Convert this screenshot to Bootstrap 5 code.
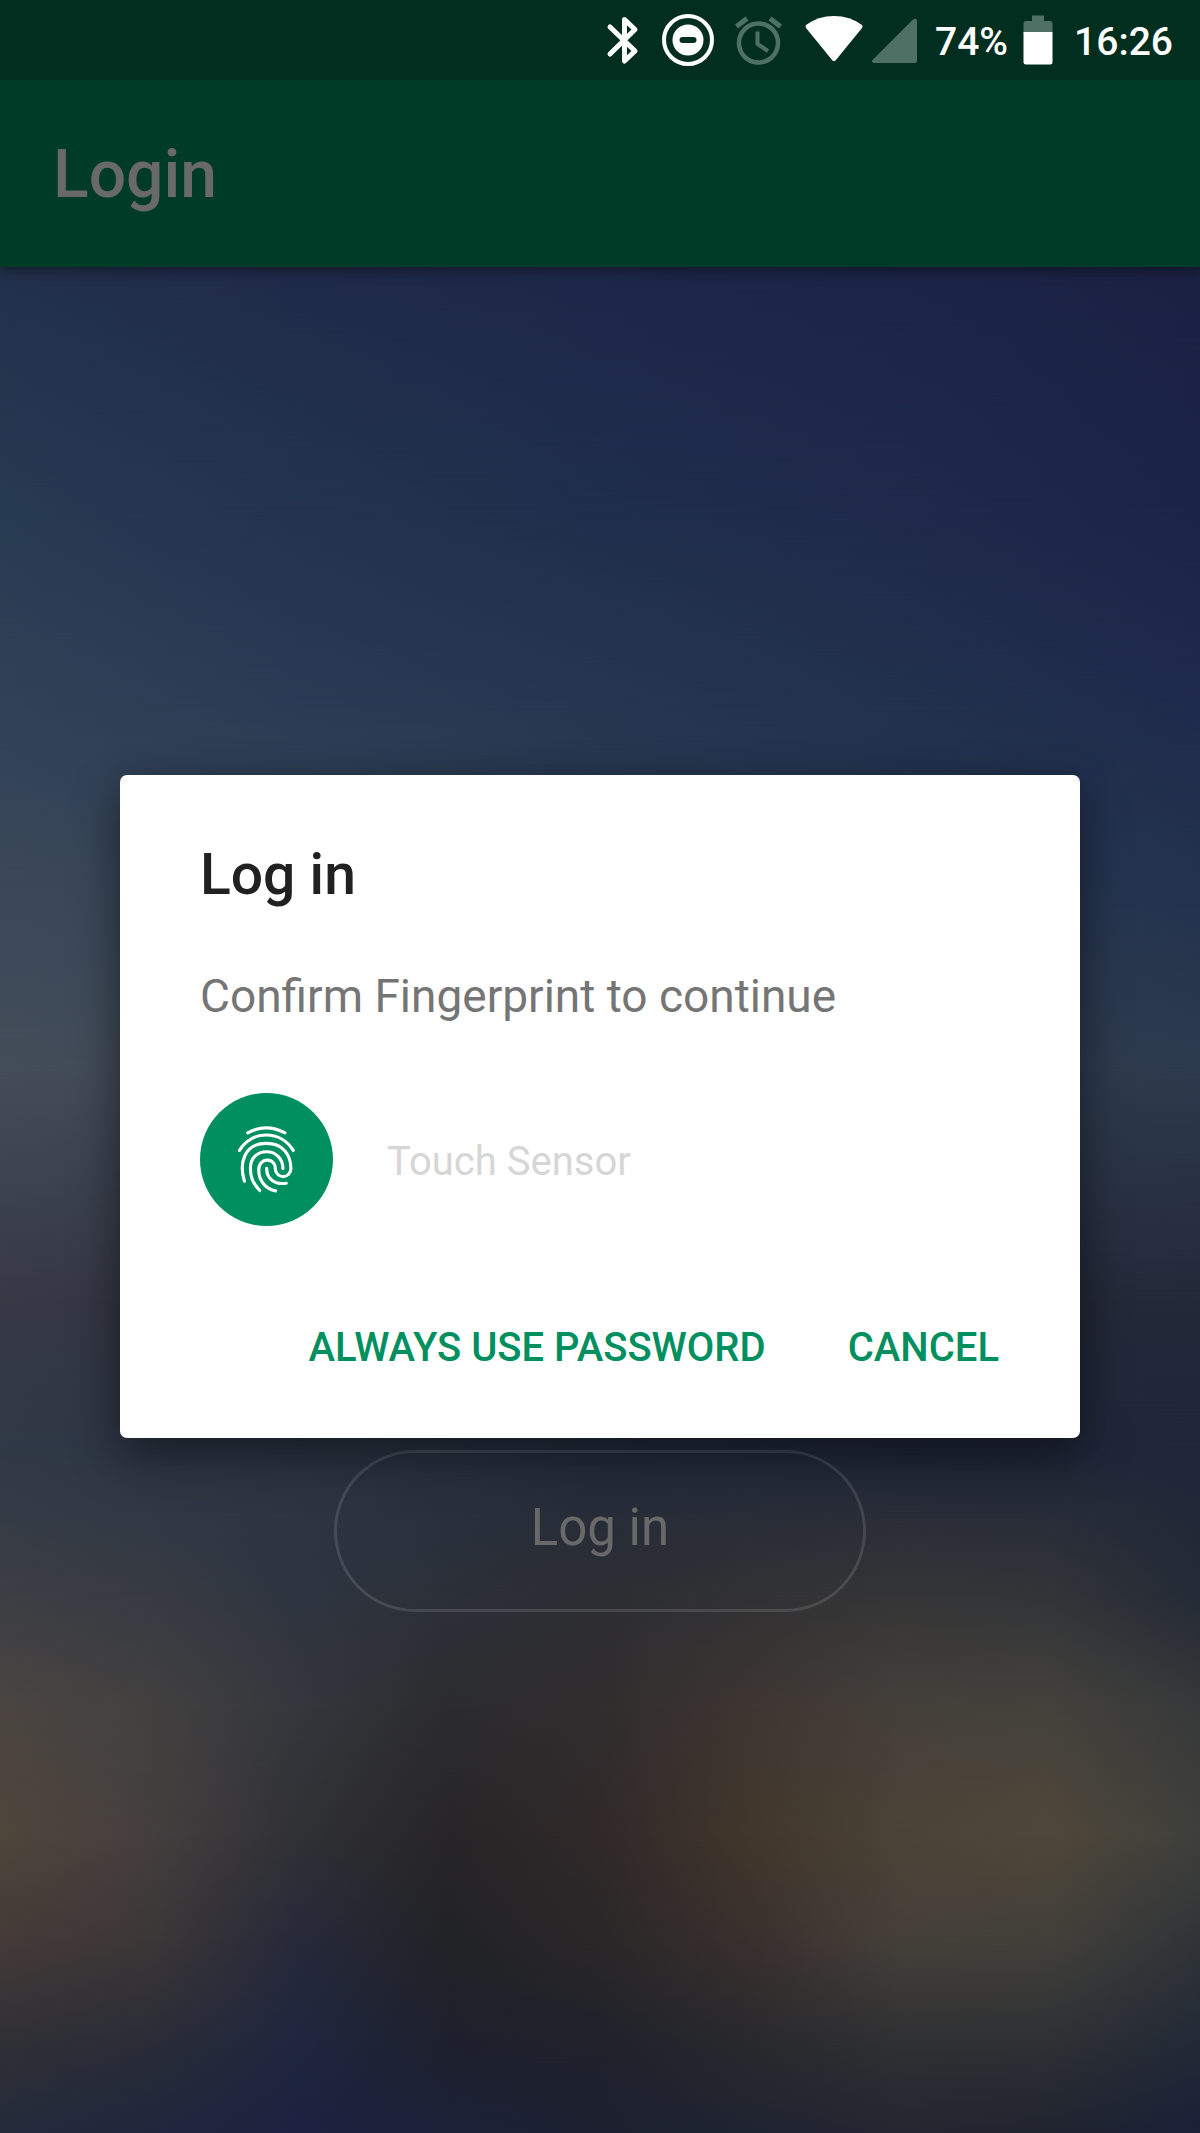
<!DOCTYPE html>
<html lang="en">
<head>
<meta charset="utf-8">
<meta name="viewport" content="width=device-width, initial-scale=1">
<title>Login</title>
<link href="https://cdn.jsdelivr.net/npm/bootstrap@5.3.0/dist/css/bootstrap.min.css" rel="stylesheet">
<style>
  body { font-family: Roboto, "Noto Sans", sans-serif; background: #1c2240; }

  /* Backdrop: horizontal colour bands, each fading in over the one above */
  .band { position: absolute; inset: 0; background: linear-gradient(to right, var(--c)); -webkit-mask-image: linear-gradient(transparent var(--a), #000 var(--b)); mask-image: linear-gradient(transparent var(--a), #000 var(--b)); }
  .band-1 { --a: -2%; --b: -1%; --c: #22304b, #1f2a4a, #1d2749, #1c2447, #1b2143; }
  .band-2 { --a: 12%; --b: 24%; --c: #273b52, #23344f, #202e4d, #1f2a4b, #1c2447; }
  .band-3 { --a: 24%; --b: 33%; --c: #314258, #2a3b54, #263750, #22314e, #1f2b4c; }
  .band-4 { --a: 33%; --b: 41%; --c: #3a4858, #36465a, #2b3c54, #283952, #23324e; }
  .band-5 { --a: 41%; --b: 50%; --c: #444d5a, #404a58, #36424f, #303d4e, #2d3b4e; }
  .band-6 { --a: 50%; --b: 61%; --c: #373945, #2f3440, #292d3a, #252a39, #242939; }
  .band-7 { --a: 61%; --b: 68%; --c: #303947, #2b3543, #232c3c, #202738, #1f2639; }
  .band-8 { --a: 68%; --b: 75%; --c: #3d3f44, #383b43, #2f3540, #2c3038, #2d2e33, #323234, #363637, #333538, #252b36; }
  .band-9 { --a: 75%; --b: 80%; --c: #4b4541, #434140, #35373d, #2c2c2f, #312d2e, #3e3632, #45403b, #44423c, #37393a; }
  .band-10 { --a: 80%; --b: 86%; --c: #4f463b, #453f3f, #303135, #272527, #31292a, #42372b, #4c4337, #4f4739, #3f403c; }
  .band-11 { --a: 86%; --b: 91%; --c: #453a38, #3c3737, #26293a, #222326, #2a2728, #3a302e, #45403a, #42403a, #303438; }
  .band-12 { --a: 91%; --b: 96%; --c: #2f3036, #292c37, #1f263f, #1d202d, #1f222b, #28292d, #2f3033, #2d3034, #222936; }
  .band-13 { --a: 96%; --b: 100%; --c: #242b3b, #20273d, #1c2240, #1c2138, #1c2030, #1f2431, #242631, #20242f, #1b2038; }

  .status { height: 80px; background: #022e20; color: #fff; font-size: 39px; font-weight: 500; line-height: 80px; padding-right: 27px; }
  .status svg { height: 80px; flex: none; }
  .status span { padding-top: 3px; }
  .charge { padding: 0 9px 0 14px; }
  .clock { padding-left: 15px; }
  .dim { fill: #4f7065; }
  .toolbar { height: 187px; background: #003b27; padding: 3px 53px 0; box-shadow: 0 4px 12px rgba(0, 0, 0, .4); }
  .toolbar h1 { font-size: 66px; font-weight: 500; line-height: 80px; color: #696969; }
  .pill { width: 532px; height: 162px; margin-bottom: 521px; border: 3px solid rgba(255, 255, 255, .12); border-radius: 81px; font-size: 51px; color: #696969; padding: 0 0 6px; }
  .pill:hover { color: #808080; border-color: #666; }

  .scrim { position: absolute; inset: 80px 0 0; }
  .dialog { width: 80%; border-radius: 7px; padding: 67px 80px 65px; box-shadow: 0 20px 50px rgba(0, 0, 0, .4), 0 0 30px rgba(0, 0, 0, .15); }
  .dialog h2 { font-size: 57px; font-weight: 500; line-height: 66px; color: #212121; margin-bottom: 60px; }
  .message { font-size: 46px; line-height: 56px; color: #757575; margin-bottom: 69px; }
  .sensor { gap: 54px; font-size: 40px; color: #d6d6d6; }
  .sensor span { padding-top: 4px; }
  .finger { width: 133px; height: 133px; flex: none; }
  .actions { gap: 82px; margin-top: 97px; padding-right: 1px; }
  .action { font-size: 40px; font-weight: 500; line-height: 50px; color: #009060; padding: 0; border: 0; border-radius: 4px; }
  .action:hover { color: #00704b; }
</style>
<script src="https://cdn.jsdelivr.net/npm/bootstrap@5.3.0/dist/js/bootstrap.bundle.min.js"></script>
</head>
<body>
<div class="position-relative min-vh-100 d-flex flex-column overflow-hidden">
  <div class="position-absolute top-0 start-0 w-100 h-100" aria-hidden="true">
    <div class="band band-1"></div><div class="band band-2"></div><div class="band band-3"></div>
    <div class="band band-4"></div><div class="band band-5"></div><div class="band band-6"></div>
    <div class="band band-7"></div><div class="band band-8"></div><div class="band band-9"></div>
    <div class="band band-10"></div><div class="band band-11"></div><div class="band band-12"></div>
    <div class="band band-13"></div>
  </div>

  <div class="status d-flex justify-content-end align-items-center position-relative z-1">
    <svg width="54" viewBox="596 0 54 80" role="img" aria-label="Bluetooth" fill="none" stroke="#fff" stroke-width="5" stroke-linecap="round" stroke-linejoin="round"><path d="M610 27 635 51 624.500 61V19.500L635 29.500 610 54"/></svg>
    <svg width="75" viewBox="650 0 75 80" role="img" aria-label="Do not disturb"><circle cx="688" cy="40" r="24" fill="none" stroke="#fff" stroke-width="4"/><circle cx="688" cy="40" r="15.500" fill="#fff"/><rect x="679.500" y="37" width="17" height="6" rx="3" fill="#022e20"/></svg>
    <svg width="68" viewBox="725 0 68 80" role="img" aria-label="Alarm" fill="none" stroke="#4f7065" stroke-width="4.500"><circle cx="758.500" cy="43" r="19.500"/><path d="M757.500 31.500V44l10.500 7" stroke-width="4"/><path d="M736.500 26.500 747 18.500M770 18.500 780.500 26.500" stroke-width="5"/></svg>
    <svg width="74" viewBox="793 0 74 80" role="img" aria-label="Wi-Fi"><path d="M806 25Q818 16 834 16T862 25Q863 26.500 862 28L835.500 60.500Q834 62 832.500 60.500L806 28Q805 26.500 806 25Z" fill="#fff"/></svg>
    <svg width="54" viewBox="867 0 54 80" role="img" aria-label="Mobile signal"><path d="M873 59.500 912.500 20Q916.500 17 917 21V61Q917 63 915 63H874Q870.500 62 873 59.500Z" class="dim"/></svg>
    <span class="charge">74%</span>
    <svg width="42" viewBox="1018 0 42 80" role="img" aria-label="Battery"><path d="M1033 15.500H1045V21H1051Q1053.500 21 1053.500 23.500V33H1024.500V23.500Q1024.500 21 1027 21H1033Z" class="dim"/><path d="M1024.500 32H1053.500V62Q1053.500 64.500 1051 64.500H1027Q1024.500 64.500 1024.500 62Z" fill="#fff"/></svg>
    <span class="clock">16:26</span>
  </div>

  <header class="toolbar d-flex align-items-center position-relative">
    <h1 class="m-0">Login</h1>
  </header>

  <main class="flex-grow-1 d-flex flex-column align-items-center justify-content-end position-relative">
    <button type="button" class="pill btn">Log in</button>
  </main>

  <div class="scrim d-flex align-items-center justify-content-center">
    <section class="dialog bg-white" role="dialog" aria-labelledby="dialog-title">
      <h2 id="dialog-title">Log in</h2>
      <p class="message">Confirm Fingerprint to continue</p>
      <div class="sensor d-flex align-items-center">
        <svg class="finger" viewBox="30 36 401 401" role="img" aria-label="Fingerprint">
          <circle cx="230.500" cy="236.500" r="200.500" fill="#009060"/>
          <g fill="none" stroke="#fff" stroke-width="9.500" stroke-linecap="round">
            <path d="M174 156Q230 126 286 156"/>
            <path d="M149 209C187 147 273 147 311 209"/>
            <path d="M164 302C147 247 163 188 230 188C283 188 304 225 304 264A23.500 24 0 0 1 257 264C257 229 207 229 207 268C207 300 228 325 258 331"/>
            <path d="M210 330C186 305 182 285 182 262C182 232 203 213 230 213C260 213 280 235 280 264"/>
            <path d="M231 263C231 298 258 313 290 308"/>
          </g>
        </svg>
        <span>Touch Sensor</span>
      </div>
      <div class="actions d-flex justify-content-end">
        <button type="button" class="action btn">ALWAYS USE PASSWORD</button>
        <button type="button" class="action btn">CANCEL</button>
      </div>
    </section>
  </div>
</div>
</body>
</html>
